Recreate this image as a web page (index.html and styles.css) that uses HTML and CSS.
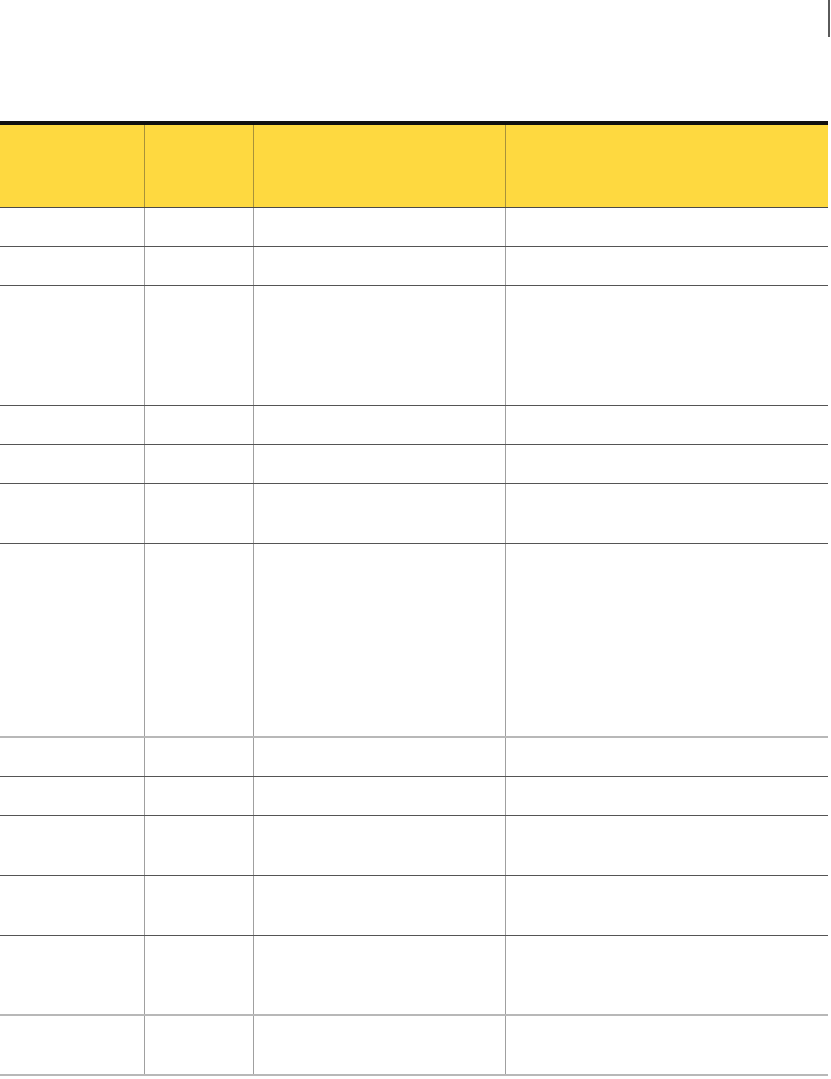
FILE: index.html
```html
<!DOCTYPE html>
<html lang="en">
<head>
<meta charset="utf-8">
<title>Table</title>
<link rel="stylesheet" href="styles.css">
</head>
<body>
<div class="page">
  <div class="corner-mark"></div>
  <table class="grid">
    <colgroup>
      <col class="c1"><col class="c2"><col class="c3"><col class="c4">
    </colgroup>
    <thead>
      <tr class="head"><th></th><th></th><th></th><th></th></tr>
    </thead>
    <tbody>
      <tr class="h39"><td></td><td></td><td></td><td></td></tr>
      <tr class="h39"><td></td><td></td><td></td><td></td></tr>
      <tr class="h120"><td></td><td></td><td></td><td></td></tr>
      <tr class="h39"><td></td><td></td><td></td><td></td></tr>
      <tr class="h39"><td></td><td></td><td></td><td></td></tr>
      <tr class="h60"><td></td><td></td><td></td><td></td></tr>
      <tr class="h194 light"><td></td><td></td><td></td><td></td></tr>
      <tr class="h39"><td></td><td></td><td></td><td></td></tr>
      <tr class="h39"><td></td><td></td><td></td><td></td></tr>
      <tr class="h60"><td></td><td></td><td></td><td></td></tr>
      <tr class="h60"><td></td><td></td><td></td><td></td></tr>
      <tr class="h80 light"><td></td><td></td><td></td><td></td></tr>
      <tr class="h60 light"><td></td><td></td><td></td><td></td></tr>
    </tbody>
  </table>
</div>
</body>
</html>
```
FILE: styles.css
```css
html, body {
  margin: 0;
  padding: 0;
  background: #ffffff;
  font-family: "Liberation Sans", Arial, sans-serif;
}

.page {
  width: 831px;
}

.corner-mark {
  width: 2px;
  height: 37px;
  margin-left: 828px;
  background: #5a5a5a;
}

.grid {
  margin-top: 84px;
  width: 828px;
  table-layout: fixed;
  border-collapse: collapse;
  border-spacing: 0;
  border-top: 4px solid #111111;
}

.c1 { width: 144px; }
.c2 { width: 109px; }
.c3 { width: 252px; }
.c4 { width: 323px; }

.grid th,
.grid td {
  padding: 0;
  box-sizing: border-box;
}

.grid th {
  background: #fed940;
  height: 84px;
  border-bottom: 1px solid #4a4a4a;
  border-left: 1px solid #a8923a;
}

.grid td {
  border-bottom: 1px solid #555555;
  border-left: 1px solid #a0a0a0;
}

.grid th:first-child,
.grid td:first-child {
  border-left: none;
}

.grid tr.light td {
  border-bottom: 2px solid #b8b8b8;
}

.h39 td { height: 39px; }
.h60 td { height: 60px; }
.h80 td { height: 80px; }
.h120 td { height: 120px; }
.h194 td { height: 194px; }
```
